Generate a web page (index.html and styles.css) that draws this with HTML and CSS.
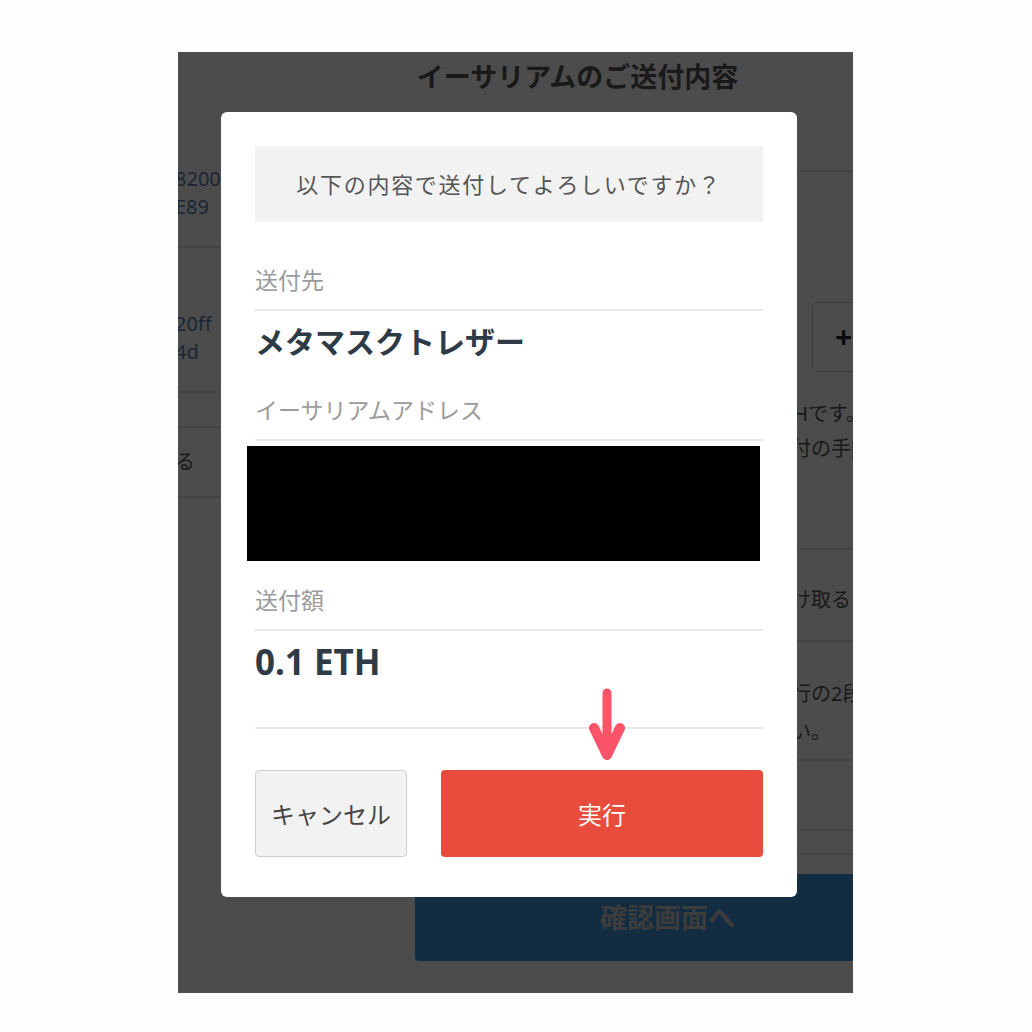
FILE: index.html
```html
<!DOCTYPE html>
<html lang="ja">
<head>
    <meta charset="UTF-8">
    <meta name="viewport" content="width=device-width, initial-scale=1.0">
    <title>イーサリアムのご送付内容</title>
    <link rel="stylesheet" href="styles.css">
</head>
<body>
    <div class="screen">
        <!-- ページ本体 -->
        <div class="page">
            <h1 class="page-title">イーサリアムのご送付内容</h1>
            <div class="page-body">
                <div class="col-left">
                    <div class="addr-row">
                        <p>8200c</p>
                        <p>E89</p>
                    </div>
                    <div class="addr-row">
                        <p>20ff</p>
                        <p>4d</p>
                    </div>
                    <div class="row-btn">る</div>
                </div>
                <div class="col-right">
                    <div class="amount-row">
                        <div class="plus-btn">+</div>
                    </div>
                    <p class="note">ETHです。</p>
                    <p class="note">送付の手数料</p>
                    <div class="receive-btn">受け取る</div>
                    <p class="note note-low">実行の2段階</p>
                    <p class="note">さい。</p>
                    <div class="thin-rows">
                        <div></div>
                        <div></div>
                        <div></div>
                    </div>
                </div>
            </div>
            <div class="confirm-wrap">
                <div class="confirm-btn">確認画面へ</div>
            </div>
        </div>
        <div class="overlay"></div>

        <!-- 確認ダイアログ -->
        <div class="modal">
            <div class="modal-head">以下の内容で送付してよろしいですか？</div>

            <div class="field field-first">
                <div class="label">送付先</div>
                <div class="value">メタマスクトレザー</div>
            </div>

            <div class="field">
                <div class="label">イーサリアムアドレス</div>
                <div class="redacted"></div>
            </div>

            <div class="field field-amount">
                <div class="label">送付額</div>
                <div class="value value-amount">0.1 ETH</div>
            </div>

            <div class="modal-foot">
                <button class="btn btn-cancel">キャンセル</button>
                <button class="btn btn-run">実行</button>
            </div>

            <svg class="pointer" viewBox="0 0 36 74" width="36" height="74">
                <line x1="18" y1="5" x2="18" y2="66" stroke="#fb5468" stroke-width="9" stroke-linecap="round"/>
                <polyline points="5,40 18,67 31,40" fill="none" stroke="#fb5468" stroke-width="10" stroke-linecap="round" stroke-linejoin="round"/>
            </svg>
        </div>
    </div>
</body>
</html>
```

FILE: styles.css
```css
body {
    margin: 0;
    background-color: #fdfdfd;
    font-family: "Noto Sans", "Noto Sans CJK JP", sans-serif;
}
.screen {
    position: relative;
    width: 675px;
    height: 941px;
    margin: 52px 0 0 178px;
    overflow: hidden;
    background-color: #fff;
}
p {
    margin: 0;
}

/* 背景のページ */
.page {
    font-size: 20px;
    color: #555;
}
.page-title {
    margin: 0;
    padding: 6px 0 0 237px;
    width: 325px;
    text-align: center;
    font-size: 27px;
    line-height: 38px;
    color: #555;
}
.page-body {
    display: grid;
    grid-template-columns: 300px 1fr;
    margin-left: -3px;
}
.col-left {
    padding-top: 69px;
}
.addr-row {
    padding: 0 0 25px;
    border-bottom: 2px solid #e3e3e3;
    line-height: 28px;
    color: #5a84b0;
    white-space: nowrap;
}
.addr-row + .addr-row {
    padding-top: 62px;
}
.row-btn {
    margin-top: 33px;
    height: 68px;
    line-height: 68px;
    border-top: 2px solid #e3e3e3;
    border-bottom: 2px solid #e3e3e3;
    color: #555;
}
.col-right {
    padding-left: 296px;
    white-space: nowrap;
}
.amount-row {
    border-top: 2px solid #e3e3e3;
    margin-top: 74px;
    padding: 130px 0 0 41px;
}
.plus-btn {
    width: 60px;
    height: 70px;
    border: 1px solid #ccc;
    border-radius: 6px;
    line-height: 68px;
    padding-left: 22px;
    font-size: 30px;
    font-weight: bold;
    color: #222;
    box-sizing: border-box;
}
.note {
    line-height: 35px;
}
.amount-row + .note {
    margin-top: 24px;
}
.receive-btn {
    margin-top: 82px;
    height: 90px;
    line-height: 100px;
    border-top: 2px solid #e3e3e3;
    border-bottom: 2px solid #e3e3e3;
    padding-left: 280px;
    margin-left: -280px;
}
.note-low {
    margin-top: 32px;
    line-height: 40px;
}
.thin-rows {
    margin-top: 10px;
    margin-left: -300px;
}
.thin-rows div {
    height: 22px;
    border-top: 2px solid #e3e3e3;
}
.thin-rows div:first-child {
    height: 68px;
}
.confirm-wrap {
    position: absolute;
    left: 237px;
    top: 822px;
    width: 520px;
}
.confirm-btn {
    height: 87px;
    line-height: 87px;
    padding-left: 185px;
    background-color: #3f96dc;
    border-radius: 4px;
    font-size: 27px;
    font-weight: bold;
    color: #c8c8c8;
}
.overlay {
    position: absolute;
    inset: 0;
    background-color: rgba(0, 0, 0, 0.7);
}

/* ダイアログ */
.modal {
    position: absolute;
    left: 43px;
    top: 60px;
    width: 576px;
    padding: 34px 34px 40px;
    box-sizing: border-box;
    background-color: #fff;
    border-radius: 6px;
}
.modal-head {
    height: 76px;
    line-height: 76px;
    background-color: #f2f2f2;
    text-align: center;
    font-size: 22px;
    letter-spacing: 1.7px;
    color: #555;
}
.field {
    margin-top: 28px;
}
.field-first {
    margin-top: 40px;
}
.field-amount {
    margin-top: 21px;
}
.label {
    line-height: 36px;
    padding-bottom: 11px;
    border-bottom: 2px solid #e8e8e8;
    font-size: 23px;
    color: #9b9b9b;
}
.value {
    padding-top: 9px;
    line-height: 44px;
    font-size: 30px;
    font-weight: bold;
    color: #2e3a45;
}
.value-amount {
    font-size: 35px;
}
.redacted {
    margin: 5px 0 0 -8px;
    width: 513px;
    height: 115px;
    background-color: #000;
}
.modal-foot {
    display: flex;
    gap: 34px;
    margin-top: 43px;
    padding-top: 41px;
    border-top: 2px solid #e8e8e8;
}
.btn {
    height: 87px;
    border-radius: 4px;
    font-family: "Noto Sans CJK JP", sans-serif;
    font-size: 24px;
    cursor: pointer;
}
.btn-cancel {
    width: 152px;
    background-color: #f2f2f2;
    border: 1px solid #cfcfcf;
    color: #444;
}
.btn-run {
    flex-grow: 1;
    background-color: #e74c3c;
    border: none;
    color: #fff;
}
.pointer {
    position: absolute;
    left: 368px;
    top: 576px;
}
```
